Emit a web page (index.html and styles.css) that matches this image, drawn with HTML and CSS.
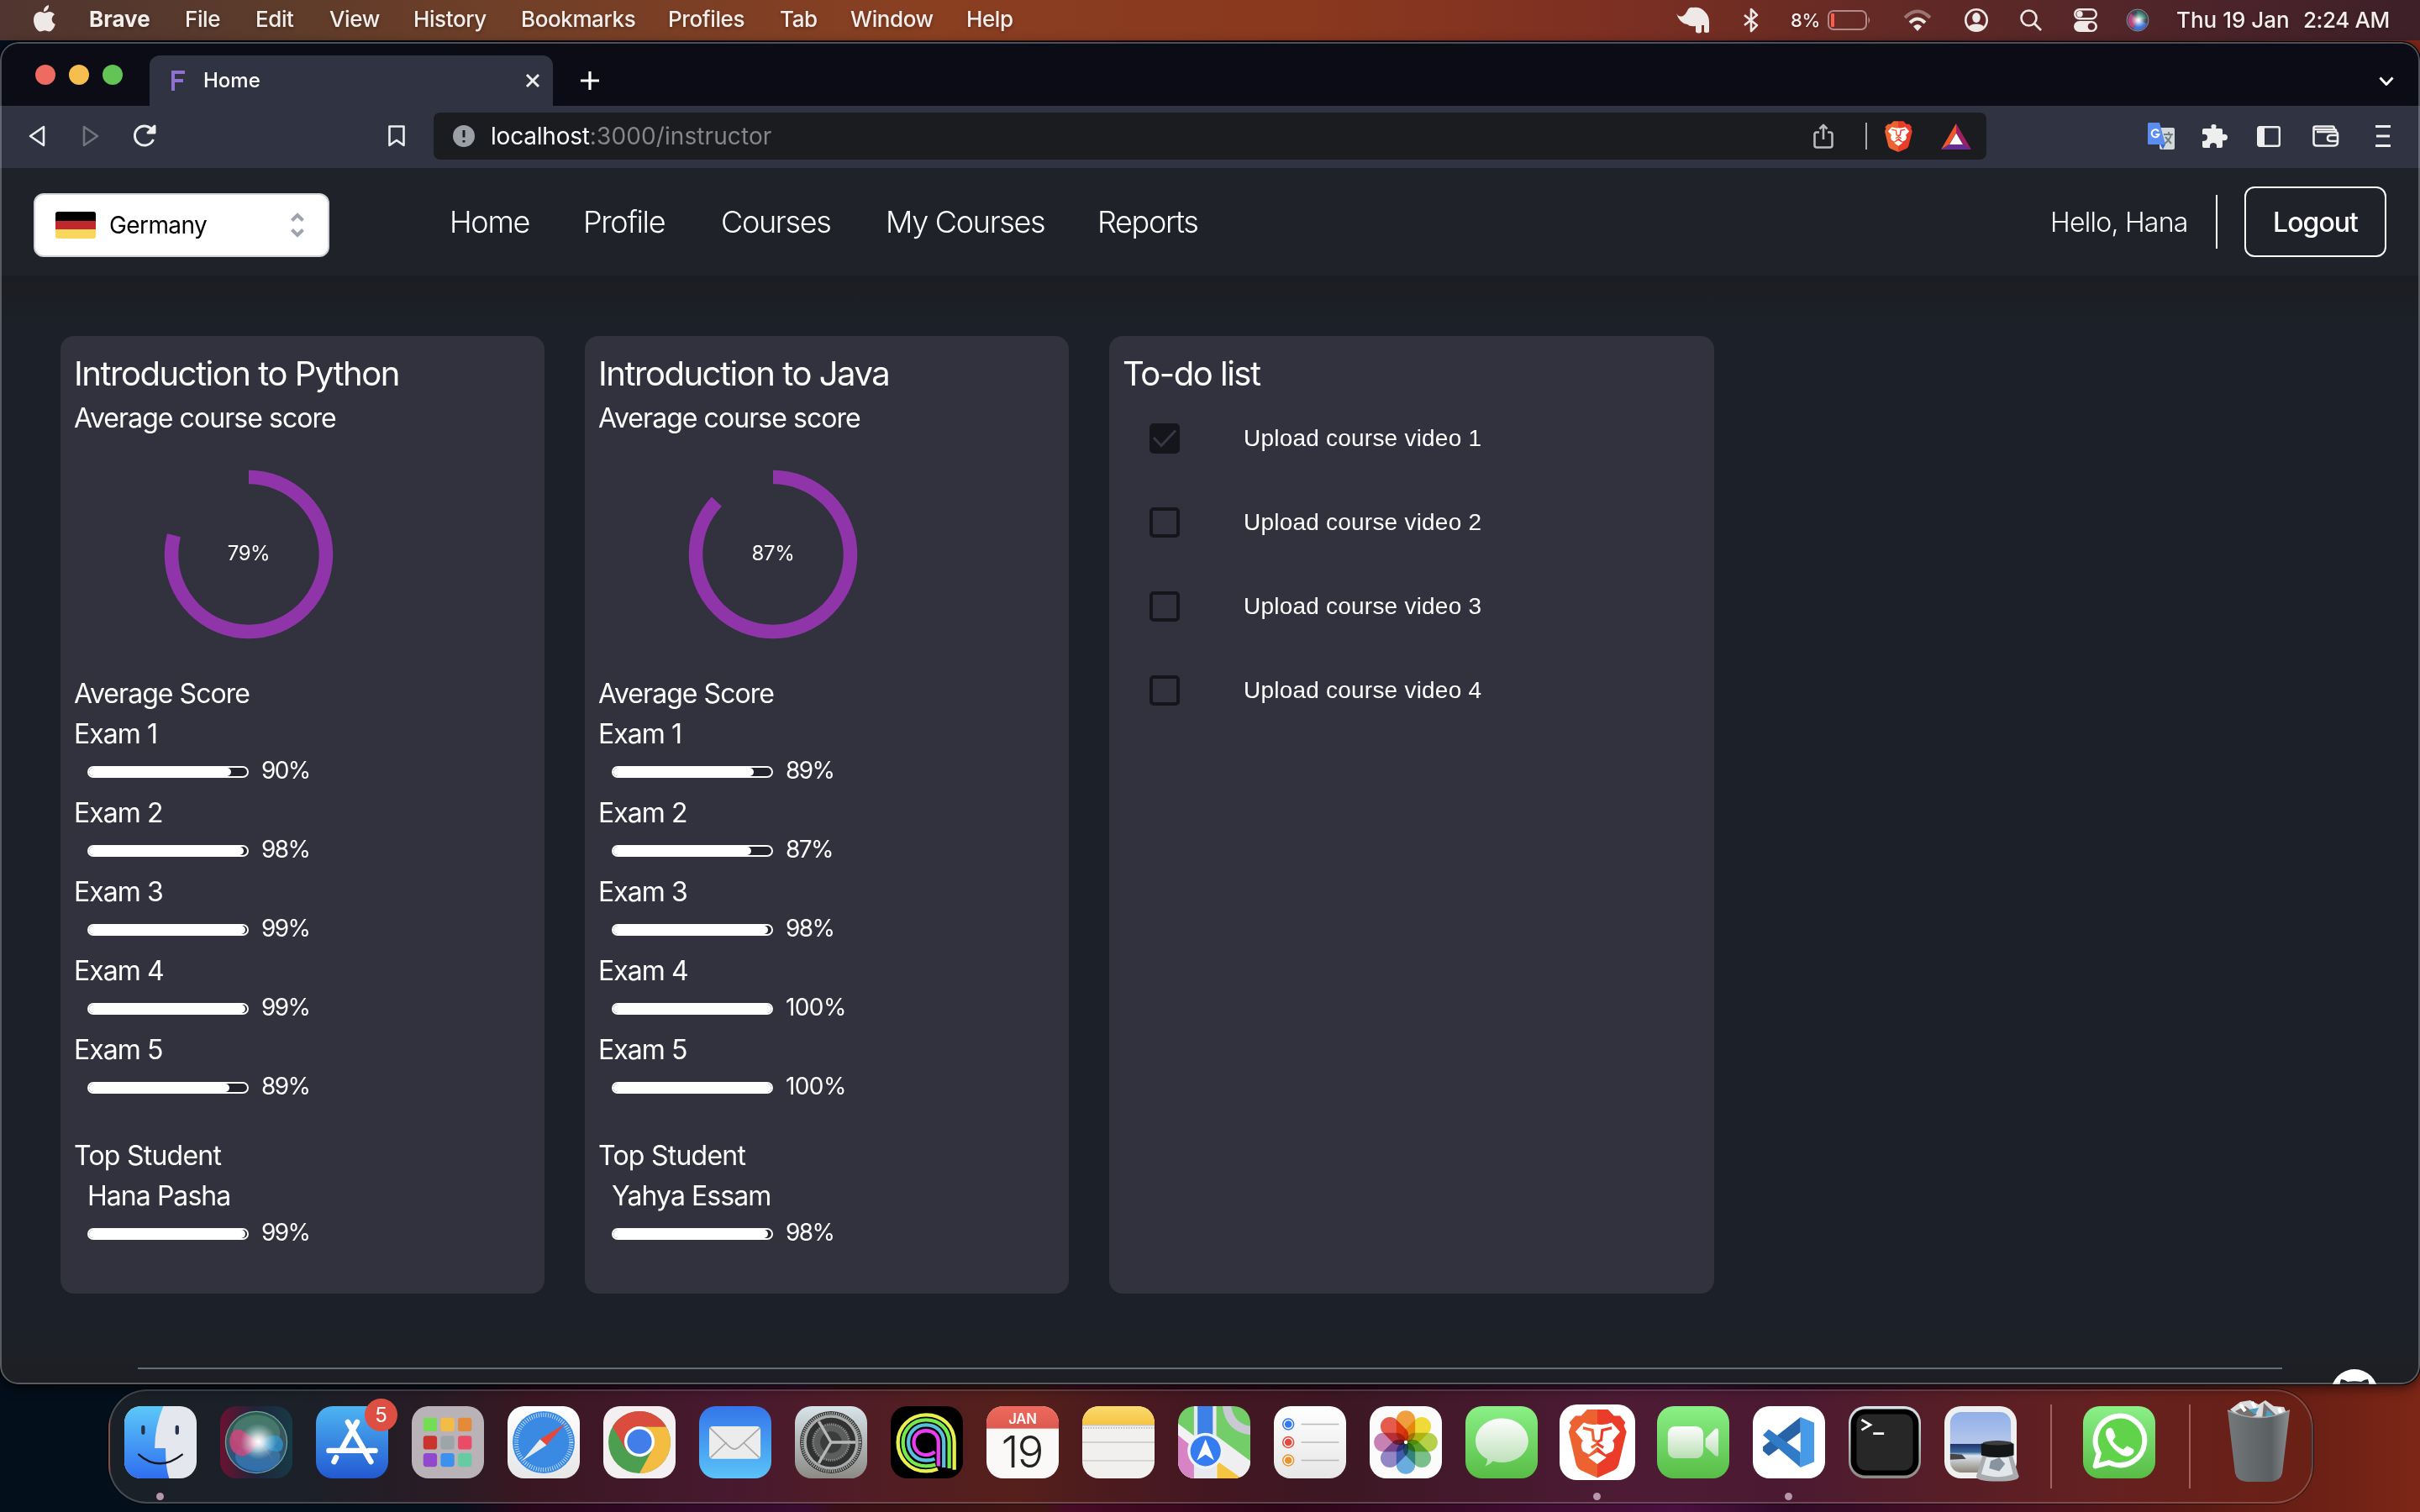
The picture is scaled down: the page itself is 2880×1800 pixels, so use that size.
FILE: index.html
```html
<!DOCTYPE html>
<html lang="en">
<head>
<meta charset="utf-8">
<title>Home</title>
<link rel="stylesheet" href="styles.css">
</head>
<body>
<svg class="defs" aria-hidden="true">
  <defs>
    <linearGradient id="blue" x2="0" y2="1"><stop stop-color="#4db4f1"/><stop offset="1" stop-color="#2359d2"/></linearGradient>
    <linearGradient id="mail" x2="0" y2="1"><stop stop-color="#3475ea"/><stop offset="1" stop-color="#5ac3f8"/></linearGradient>
    <linearGradient id="white" x2="0" y2="1"><stop stop-color="#ffffff"/><stop offset="1" stop-color="#e6e6e6"/></linearGradient>
    <linearGradient id="grey" x2="0" y2="1"><stop stop-color="#d8e4ea"/><stop offset="1" stop-color="#8c8a86"/></linearGradient>
    <linearGradient id="green" x2="0" y2="1"><stop stop-color="#8bf087"/><stop offset="1" stop-color="#57bd45"/></linearGradient>
    <linearGradient id="red" x2="0" y2="1"><stop stop-color="#ef6a5f"/><stop offset="1" stop-color="#db5a4f"/></linearGradient>
    <linearGradient id="yellow" x2="0" y2="1"><stop stop-color="#fbdb70"/><stop offset="1" stop-color="#f5c440"/></linearGradient>
    <linearGradient id="cam" x2="0" y2="1"><stop stop-color="#fdfdfd"/><stop offset="1" stop-color="#b9dfb4"/></linearGradient>
    <linearGradient id="lion"><stop offset=".5" stop-color="#ec6230"/><stop offset=".5" stop-color="#ea3c28"/></linearGradient>
    <linearGradient id="bin"><stop stop-color="#74787b"/><stop offset=".35" stop-color="#666b6e"/><stop offset=".7" stop-color="#5a5f62"/><stop offset="1" stop-color="#8b8f92"/></linearGradient>
    <linearGradient id="sky" x2="0" y2="1"><stop stop-color="#8fb0ea"/><stop offset=".52" stop-color="#b6c6ea"/><stop offset=".53" stop-color="#20356a"/><stop offset=".66" stop-color="#39649a"/><stop offset=".72" stop-color="#dce6ee"/><stop offset="1" stop-color="#8e8578"/></linearGradient>
    <linearGradient id="siriBg"><stop stop-color="#6a1230"/><stop offset=".5" stop-color="#20243c"/><stop offset="1" stop-color="#173a46"/></linearGradient>
    <linearGradient id="siriOrb" x2="0" y2="1"><stop stop-color="#2c5e50"/><stop offset=".45" stop-color="#3d5560"/><stop offset="1" stop-color="#1e4f96"/></linearGradient>
    <radialGradient id="glow"><stop stop-color="#fff"/><stop offset=".3" stop-color="#fff" stop-opacity=".75"/><stop offset="1" stop-color="#bfe8ee" stop-opacity="0"/></radialGradient>
    <linearGradient id="face" x2="0" y2="1"><stop stop-color="#5cc8f8"/><stop offset="1" stop-color="#2f6ef0"/></linearGradient>
    <clipPath id="tile"><rect width="100" height="100" rx="23"/></clipPath>
    <symbol id="brave" viewBox="0 0 100 100">
      <path fill="url(#lion)" d="M36.500 6.700H64L72 15L80 15L87 24L85 28L88.500 36L78 80Q76 85 72 87L50 97L28 87Q24 85 22 80L12 36L15.500 28L13 24L21 15H28.500Z"/>
      <path fill="#fff" d="M21 36L32 24Q41 28 50 26Q60 28 69 24L80 36L70 48Q75 52 70 62L61 66L50 56L39 66L31 62Q26 52 31 48ZM38 70L50 63L62 70L50 79Z"/>
      <path fill="none" stroke="url(#lion)" stroke-width="3.500" d="M31 31L43.500 34L45 47L50 49.500L55 47L56.500 34L69 31M42 57L50 52L58 57"/>
    </symbol>
  </defs>
</svg>

<header class="menubar">
  <svg class="apple" viewBox="0 0 26 32"><path d="M18 0C18.500 4 15.500 8 12 8C11.500 4 14.500 1 18 0ZM13 9.500C15 9.500 16.500 8 19 8C21.500 8 23.700 9.500 25 11.300C20 14.500 21 21 25.800 23C24.500 27 21.500 31.500 18.700 31.500C16.500 31.500 15.700 30.200 13.300 30.200C11 30.200 10 31.500 8 31.500C4.500 31.500 0 24.500 0 18C0 11.500 4 8 7.700 8C10 8 11.700 9.500 13 9.500Z"/></svg>
  <nav class="menus">
    <b>Brave</b><span>File</span><span>Edit</span><span>View</span><span>History</span><span>Bookmarks</span><span>Profiles</span><span>Tab</span><span>Window</span><span>Help</span>
  </nav>
  <div class="status">
    <svg class="rhino" viewBox="0 0 40 32"><path d="M1 8Q4 13 9 11Q12 9 14 5Q16 0 21 1Q30 0 35 6Q40 11 40 18V30Q37 32 34 30V22H31V30Q28 33 24 30V23Q17 24 14 21Q5 20 1 8Z"/></svg>
    <svg class="bluetooth line" viewBox="0 0 20 28"><path d="M2 8L17 20L10 27V1L17 8L2 20"/></svg>
    <span class="percent">8%</span>
    <svg class="battery" viewBox="0 0 52 24"><rect x="1" y="1" width="45" height="22" rx="6" fill="none" stroke="#b08a86" stroke-width="2"/><rect x="4" y="4" width="4" height="16" rx="1" fill="#ff5b4c"/><path d="M48.500 8Q52 12 48.500 16Z" fill="#b08a86"/></svg>
    <svg class="wifi" viewBox="0 0 34 26"><path fill="none" stroke="#9c7472" stroke-width="4" d="M2 10Q17 -5 32 10"/><path fill="none" stroke="#eee8e6" stroke-width="4" d="M8 16Q17 7 26 16"/><path d="M12 20.500Q17 15.500 22 20.500L17 26Z"/></svg>
    <svg class="user" viewBox="0 0 28 28"><circle cx="14" cy="14" r="12.700" fill="none" stroke="#eee8e6" stroke-width="2.600"/><ellipse cx="14" cy="11" rx="4.800" ry="6"/><path d="M5 22Q7 18.500 14 18.500Q21 18.500 23 22Q19 27 14 27Q9 27 5 22Z"/></svg>
    <svg class="search line" viewBox="0 0 26 26"><circle cx="10.500" cy="10.500" r="9"/><path d="M17 17L25 25"/></svg>
    <svg class="control" viewBox="0 0 28 28"><rect x="1.200" y="1.200" width="25.600" height="11" rx="5.500" fill="none" stroke="#eee8e6" stroke-width="2.400"/><circle cx="7" cy="6.700" r="3.700"/><rect y="15" width="28" height="13" rx="6.500"/><circle cx="21" cy="21.500" r="4.300" fill="#58272b"/></svg>
    <svg class="orb" viewBox="0 0 28 28"><circle cx="14" cy="14" r="13" fill="#4a4658" stroke="#7f8f98" stroke-width="1"/><path d="M14 14L6 6Q1 12 4 20L9 24Z" fill="#b8457a"/><path d="M14 14L9 25Q20 29 25 18Z" fill="#4072d8"/><path d="M14 14L25 12Q22 3 13 3Z" fill="#36806c"/><circle cx="15" cy="14" r="9" fill="url(#glow)"/></svg>
    <span class="date">Thu 19 Jan</span><span class="time">2:24 AM</span>
  </div>
</header>

<main class="window">
  <div class="tabstrip">
    <i class="light close"></i><i class="light min"></i><i class="light max"></i>
    <div class="tab">
      <svg class="favicon" viewBox="0 0 16 24"><path d="M0 0H16V4H4V10H14V14H4V24H0Z" fill="#8f72cf"/></svg>
      <span>Home</span>
      <svg class="x line" viewBox="0 0 18 18"><path d="M2 2L16 16M16 2L2 16"/></svg>
    </div>
    <svg class="plus line" viewBox="0 0 24 24"><path d="M12 1V23M1 12H23"/></svg>
    <svg class="down line" viewBox="0 0 18 12"><path d="M1.500 1.500L9 9.500L16.500 1.500"/></svg>
  </div>

  <div class="toolbar">
    <svg class="back line" viewBox="0 0 20 26"><path d="M18 2V24L2 13Z"/></svg>
    <svg class="forward line" viewBox="0 0 20 26"><path d="M2 2V24L18 13Z"/></svg>
    <svg class="reload line" viewBox="0 0 28 28"><path d="M24 8A11.500 11.500 0 1 0 24.500 18"/><path d="M26 2V10H18Z" fill="#eee"/></svg>
    <svg class="bookmark line" viewBox="0 0 20 26"><path d="M1.500 1.500H18.500V24L10 18L1.500 24Z"/></svg>
    <div class="address">
      <svg class="info" viewBox="0 0 26 26"><circle cx="13" cy="13" r="13" fill="#9aa0a6"/><path d="M13 6V14.500M13 18V20.500" stroke="#1b1c20" stroke-width="3"/></svg>
      <span class="host">localhost</span><span class="path">:3000/instructor</span>
      <svg class="share line" viewBox="0 0 24 30"><path d="M7 10.500H4Q1.500 10.500 1.500 13V26Q1.500 28.500 4 28.500H20Q22.500 28.500 22.500 26V13Q22.500 10.500 20 10.500H17M12 19V2M7.500 6.500L12 2L16.500 6.500"/></svg>
      <i class="bar"></i>
      <svg class="shield" viewBox="12 6 77 91" preserveAspectRatio="none"><use href="#brave" width="100" height="100"/></svg>
      <svg class="bat" viewBox="0 0 36 31"><path fill="#f1562b" d="M18 0V11L9 26L0 31Z"/><path fill="#9e1f63" d="M18 0L36 31L27 26L18 11Z"/><path fill="#662d91" d="M0 31L9 25H27L36 31Z"/><path fill="#fff" d="M18 11.500L26 25H10Z"/></svg>
    </div>
    <svg class="translate" viewBox="0 0 32 32"><rect x="14" y="6" width="18" height="26" rx="2" fill="#d5d8d8"/><path d="M15 26H21L18 32Z" fill="#3367d6"/><path d="M1 0H14L21 26H1Q0 26 0 25V1Z" fill="#5b8def"/><path d="M19 14H30M25 11V14M28 14Q26 21 20 25M21 17L28 25" fill="none" stroke="#6e8087" stroke-width="2"/><path d="M13 10.500A4.500 4.500 0 1 0 13.500 14H9.500" fill="none" stroke="#fff" stroke-width="2"/></svg>
    <svg class="puzzle" viewBox="0 0 30 28"><path d="M8 5H11Q9 0 13.500 0Q18 0 16 5H22Q24 5 24 7V12Q30 11 30 15.500Q30 20 24 19V26Q24 28 22 28H17Q18 22 13 22Q8 22 9 28H2Q0 28 0 26V20Q6 20 6 15.500Q6 11 0 12V7Q0 5 2 5Z"/></svg>
    <svg class="side" viewBox="0 0 28 25"><rect x="1.200" y="1.200" width="25.600" height="22.600" rx="2" fill="none" stroke="#eee" stroke-width="2.400"/><path d="M1 1H9V24H1Z"/></svg>
    <svg class="wallet line" viewBox="0 0 32 26"><path d="M28 8V6Q28 5 25 5H4Q1.500 5 1.500 3.500Q1.500 1.500 4 1.500H24Q26 1.500 26 5M1.500 3V21Q1.500 24.500 5 24.500H25Q30 24.500 30 20V11Q30 8 27 8H5M30 12H22Q18 12 18 15.500Q18 19 22 19H30"/></svg>
    <svg class="burger line" viewBox="0 0 18 26"><path d="M0 1.500H18M1 13H17M0 24.500H18"/></svg>
  </div>

  <div class="page">
    <header class="nav">
      <div class="select">
        <i class="flag"></i><span>Germany</span>
        <svg class="chev" viewBox="0 0 18 30"><path d="M2.500 9.500L9 3L15.500 9.500M2.500 20.500L9 27L15.500 20.500"/></svg>
      </div>
      <nav class="links"><a>Home</a><a>Profile</a><a>Courses</a><a>My Courses</a><a>Reports</a></nav>
      <span class="hello">Hello, Hana</span>
      <i class="rule"></i>
      <a class="logout">Logout</a>
    </header>

    <section class="cards">
      <article class="card">
        <h2>Introduction to Python</h2>
        <p>Average course score</p>
        <div class="ring"><svg viewBox="0 0 200 200"><circle cx="100" cy="100" r="92" pathLength="100" stroke-dasharray="79 21"/></svg><span>79%</span></div>
        <p>Average Score</p>
        <p>Exam 1</p><div class="score"><i class="track"><i style="width:90%"></i></i>90%</div>
        <p>Exam 2</p><div class="score"><i class="track"><i style="width:98%"></i></i>98%</div>
        <p>Exam 3</p><div class="score"><i class="track"><i style="width:99%"></i></i>99%</div>
        <p>Exam 4</p><div class="score"><i class="track"><i style="width:99%"></i></i>99%</div>
        <p>Exam 5</p><div class="score"><i class="track"><i style="width:89%"></i></i>89%</div>
        <p class="top">Top Student</p>
        <p class="name">Hana Pasha</p><div class="score"><i class="track"><i style="width:99%"></i></i>99%</div>
      </article>
      <article class="card">
        <h2>Introduction to Java</h2>
        <p>Average course score</p>
        <div class="ring"><svg viewBox="0 0 200 200"><circle cx="100" cy="100" r="92" pathLength="100" stroke-dasharray="87 13"/></svg><span>87%</span></div>
        <p>Average Score</p>
        <p>Exam 1</p><div class="score"><i class="track"><i style="width:89%"></i></i>89%</div>
        <p>Exam 2</p><div class="score"><i class="track"><i style="width:87%"></i></i>87%</div>
        <p>Exam 3</p><div class="score"><i class="track"><i style="width:98%"></i></i>98%</div>
        <p>Exam 4</p><div class="score full"><i class="track"><i style="width:100%"></i></i>100%</div>
        <p>Exam 5</p><div class="score full"><i class="track"><i style="width:100%"></i></i>100%</div>
        <p class="top">Top Student</p>
        <p class="name">Yahya Essam</p><div class="score"><i class="track"><i style="width:98%"></i></i>98%</div>
      </article>
      <article class="card todo">
        <h2>To-do list</h2>
        <ul>
          <li><i class="box done"><svg viewBox="0 0 36 36"><path d="M5 17L14 26.500L31 8.500"/></svg></i>Upload course video 1</li>
          <li><i class="box"></i>Upload course video 2</li>
          <li><i class="box"></i>Upload course video 3</li>
          <li><i class="box"></i>Upload course video 4</li>
        </ul>
      </article>
    </section>
    <footer class="footer">
      <hr>
      <svg class="github" viewBox="0 0 56 56"><circle cx="28" cy="28" r="28" fill="#fff"/><path fill="#1e2128" d="M12 12Q16 12 20 15Q28 13.500 36 15Q40 12 44 12Q46 17 45 22Q48 38 28 39Q8 38 11 22Q10 17 12 12Z"/></svg>
    </footer>
  </div>
</main>

<footer class="dock">
  <div class="app open"><svg viewBox="0 0 100 100"><g clip-path="url(#tile)"><rect width="100" height="100" fill="#e4e8ee"/><path fill="url(#face)" d="M0 0H54Q42 28 42 58H57Q57 85 62 100H0Z"/></g><path d="M26 29V37M73 29V37" stroke="#24324a" stroke-width="5" stroke-linecap="round"/><path d="M20 67Q48 92 80 67" fill="none" stroke="#15181e" stroke-width="2.800" stroke-linecap="round"/></svg></div>
  <div class="app"><svg viewBox="0 0 100 100"><rect width="100" height="100" rx="23" fill="url(#siriBg)"/><circle cx="50" cy="50" r="42.500" fill="url(#siriOrb)" stroke="#6fa898" stroke-width="1.500"/><ellipse cx="50" cy="38" rx="33" ry="26" fill="#5d9c84" opacity=".45"/><ellipse cx="52" cy="70" rx="31" ry="20" fill="#4aa0d8" opacity=".4"/><path d="M13 46Q16 31 27 32Q38 38 54 50Q40 70 30 69Q13 66 13 46Z" fill="#d8447c" opacity=".8"/><path d="M54 50Q64 39 80 41Q92 50 84 62Q70 66 54 50Z" fill="#2f9ad8" opacity=".7"/><path d="M53 48L76 78L57 52Z" fill="#f0a0b8" opacity=".7"/><circle cx="53" cy="49" r="25" fill="url(#glow)"/></svg></div>
  <div class="app"><svg viewBox="0 0 100 100"><rect width="100" height="100" rx="23" fill="url(#blue)"/><path d="M44 22L76 77M57 22L35 61M18 61.500H62M73 61.500H82M28 71L25 77" fill="none" stroke="#fff" stroke-width="7.500" stroke-linecap="round"/></svg><span class="badge">5</span></div>
  <div class="app"><svg viewBox="0 0 100 100"><rect width="100" height="100" rx="23" fill="#b9b3b8"/><rect x="16" y="16" width="19" height="19" rx="4" fill="#74dc55"/><rect x="40" y="16" width="19" height="19" rx="4" fill="#f3bc44"/><rect x="64" y="16" width="19" height="19" rx="4" fill="#e58a36"/><rect x="16" y="41" width="19" height="19" rx="4" fill="#c9352c"/><rect x="40" y="41" width="19" height="19" rx="4" fill="#9ea5a8"/><rect x="64" y="41" width="19" height="19" rx="4" fill="#ea4c66"/><rect x="16" y="65" width="19" height="19" rx="4" fill="#9148cd"/><rect x="40" y="65" width="19" height="19" rx="4" fill="#3c91ee"/><rect x="64" y="65" width="19" height="19" rx="4" fill="#66cba3"/></svg></div>
  <div class="app"><svg viewBox="0 0 100 100"><rect width="100" height="100" rx="23" fill="url(#white)"/><circle cx="50" cy="50" r="43" fill="#3a8ae4"/><circle cx="50" cy="50" r="38" fill="none" stroke="#cfe5fb" stroke-width="6" stroke-dasharray="1 2.300"/><path d="M80 24L54 54L45 46Z" fill="#e5483b"/><path d="M20 76L45 46L54 54Z" fill="#e8ecf0"/></svg></div>
  <div class="app"><svg viewBox="0 0 100 100"><rect width="100" height="100" rx="23" fill="#f4f0f1"/><circle cx="50" cy="50" r="43" fill="#4c9f50"/><path d="M50 28.500H87.200A43 43 0 0 1 50 93L68 60Z" fill="#f4bd42"/><path d="M50 50L31 60L12.800 28.500A43 43 0 0 1 87.200 28.500H50Z" fill="#d94c3e"/><circle cx="50" cy="49" r="21" fill="#fff"/><circle cx="50" cy="49" r="17" fill="#417ee9"/></svg></div>
  <div class="app"><svg viewBox="0 0 100 100"><rect width="100" height="100" rx="23" fill="url(#mail)"/><rect x="14" y="28" width="71" height="45" rx="5" fill="#ececec"/><path d="M16 71L38 50M83 71L61 50M15 30L41 55Q49 64 57 55L84 30" fill="none" stroke="#a9a9a9" stroke-width="2"/></svg></div>
  <div class="app"><svg viewBox="0 0 100 100"><rect width="100" height="100" rx="23" fill="url(#grey)"/><circle cx="50" cy="50" r="43" fill="#303130"/><circle cx="50" cy="50" r="36" fill="none" stroke="#a9abab" stroke-width="4"/><circle cx="50" cy="50" r="40" fill="none" stroke="#a9abab" stroke-width="4" stroke-dasharray="1.500 1.500"/><circle cx="50" cy="50" r="25" fill="#5c5e5e"/><circle cx="50" cy="50" r="25" fill="none" stroke="#8f9191" stroke-width="3" stroke-dasharray="1.500 1.500"/><circle cx="50" cy="50" r="15" fill="#3b3c3c"/><path d="M50 50H84M50 50L33 21M50 50L33 79" stroke="#b7b9b9" stroke-width="4"/></svg></div>
  <div class="app"><svg viewBox="0 0 100 100"><rect width="100" height="100" rx="23" fill="#000"/><g fill="none" stroke-width="5"><path stroke="#e6f04e" d="M65 87Q58 90 49 90C24 90 10 70 10 50S26 12 49 12S88 28 88 50V88"/><path stroke="#74ea4e" d="M62 81Q56 83 49 83C28 83 17 67 17 50S30 19 49 19S81 32 81 50V86"/><path stroke="#57bfdc" d="M61 73Q56 75 49 75C34 75 24.500 63 24.500 50S34 26 49 26S73.500 36 73.500 50V85"/><path stroke="#e93df0" d="M61 63Q56 67.500 49 67.500C38 67.500 32 59 32 50S38 34 49 34S66 41 66 50V83"/></g></svg></div>
  <div class="app"><svg viewBox="0 0 100 100"><g clip-path="url(#tile)"><rect width="100" height="100" fill="#faf9f8"/><rect width="100" height="31" fill="url(#red)"/></g><text class="jan" x="50" y="24.500">JAN</text><text class="day" x="49" y="85">19</text></svg></div>
  <div class="app"><svg viewBox="0 0 100 100"><g clip-path="url(#tile)"><rect width="100" height="100" fill="#f1f0ee"/><rect width="100" height="26" fill="url(#yellow)"/><path d="M0 26.500H100M0 50H100M0 75.500H100" stroke="#c8c6c6" stroke-width="1.600"/><path d="M1 30H100" stroke="#b5b3b3" stroke-width="2" stroke-dasharray="1.500 2"/></g></svg></div>
  <div class="app"><svg viewBox="0 0 100 100"><g clip-path="url(#tile)"><rect width="100" height="100" fill="#73cd68"/><path d="M0 24L100 100H0Z" fill="#f2f2f4"/><path d="M0 40L24 60V100H0Z" fill="#d883c4"/><path d="M52 40L100 76V100H85L40 60Z" fill="#efeff2"/><path d="M54 76L88 100H54Z" fill="#f5c542"/><path d="M22 0H53V100H22Z" fill="#e8e9ee"/><path d="M27 0H48V50H27Z" fill="#3c80e8"/><path d="M67 -4Q70 32 104 34" fill="none" stroke="#c8c9d3" stroke-width="12"/></g><circle cx="38" cy="62" r="25" fill="#eff2f8"/><circle cx="38" cy="62" r="21" fill="#357cf0"/><path d="M38 46L50 75L38 67L26 75Z" fill="#fff"/></svg></div>
  <div class="app"><svg viewBox="0 0 100 100"><rect width="100" height="100" rx="23" fill="url(#white)"/><path d="M38 25H90M38 50H90M38 75H90" stroke="#b9b9bb" stroke-width="1.800"/><g fill="#fff" stroke-width="1.800"><circle cx="20" cy="25" r="7.500" stroke="#3478f0"/><circle cx="20" cy="50" r="7.500" stroke="#e24a3e"/><circle cx="20" cy="75" r="7.500" stroke="#e8942f"/></g><circle cx="20" cy="25" r="5" fill="#3478f0"/><circle cx="20" cy="50" r="5" fill="#e24a3e"/><circle cx="20" cy="75" r="5" fill="#e8942f"/></svg></div>
  <div class="app"><svg class="petals" viewBox="0 0 100 100"><rect width="100" height="100" rx="23" fill="#fbfbfb"/><g><rect x="37" y="6" width="26" height="44" rx="13" fill="#f3a23e"/><rect x="37" y="6" width="26" height="44" rx="13" fill="#f3de38" transform="rotate(45 50 50)"/><rect x="37" y="6" width="26" height="44" rx="13" fill="#b9d54a" transform="rotate(90 50 50)"/><rect x="37" y="6" width="26" height="44" rx="13" fill="#7cc28c" transform="rotate(135 50 50)"/><rect x="37" y="6" width="26" height="44" rx="13" fill="#6dafe2" transform="rotate(180 50 50)"/><rect x="37" y="6" width="26" height="44" rx="13" fill="#9488c8" transform="rotate(225 50 50)"/><rect x="37" y="6" width="26" height="44" rx="13" fill="#c884b6" transform="rotate(270 50 50)"/><rect x="37" y="6" width="26" height="44" rx="13" fill="#ea5c4c" transform="rotate(315 50 50)"/></g><circle cx="50" cy="50" r="2.500" fill="#fff"/></svg></div>
  <div class="app"><svg viewBox="0 0 100 100"><rect width="100" height="100" rx="23" fill="url(#green)"/><path d="M50 17C71 17 87 31 87 48S71 78 50 78Q43 78 38 76Q34 81 27 83Q31 78 30 73C20 68 14 59 14 48C14 31 30 17 50 17Z" fill="url(#cam)"/></svg></div>
  <div class="app open big"><svg viewBox="0 0 100 100"><rect width="100" height="100" rx="23" fill="#fff"/><use href="#brave" width="100" height="100"/></svg></div>
  <div class="app"><svg viewBox="0 0 100 100"><rect width="100" height="100" rx="23" fill="url(#green)"/><rect x="15" y="28" width="49" height="44" rx="10" fill="url(#cam)"/><path d="M67 45L80 32Q85 29 85 34V66Q85 72 80 68L67 56Z" fill="url(#cam)"/></svg></div>
  <div class="app open"><svg viewBox="0 0 100 100"><rect width="100" height="100" rx="23" fill="#fff"/><path d="M66 15V36L22 69L14 62V56Z" fill="#2763a6"/><path d="M14 40L22 32L66 64V85Z" fill="#2f7bc8"/><path d="M66 15L85 23V77L66 85Z" fill="#479ae8"/></svg></div>
  <div class="app"><svg viewBox="0 0 100 100"><rect width="100" height="100" rx="23" fill="url(#grey)"/><rect x="3" y="4" width="94" height="92" rx="20" fill="#000"/><rect x="11" y="11" width="78" height="78" rx="13" fill="#272727"/><path d="M18 19L30 26L18 33M34 38H49" fill="none" stroke="#fff" stroke-width="3.300"/></svg></div>
  <div class="app"><svg viewBox="0 0 100 100"><rect width="100" height="100" rx="23" fill="#f0eff0"/><rect x="8" y="8" width="84" height="84" rx="15" fill="url(#sky)"/><path d="M8 66L24 67L30 73L8 74Z" fill="#48454a"/><path d="M53 68H94L103 97Q103 104 74 104Q44 104 44 97Z" fill="#a9acaf"/><path d="M58 71H89L95 94Q75 102 51 94Z" fill="#e4e7ea"/><path d="M64 76L76 71L84 80L76 90L62 86Z" fill="#8794a0"/><path d="M51 52Q74 44 96 52V68Q74 74 51 68Z" fill="#151617"/><ellipse cx="73.500" cy="51" rx="20" ry="3" fill="#3b3d3e"/></svg></div>
  <i class="split"></i>
  <div class="app"><svg viewBox="0 0 100 100"><rect width="100" height="100" rx="23" fill="url(#green)"/><path d="M17 83L22 65A34 34 0 1 1 36 78Z" fill="#60d34a" stroke="#fff" stroke-width="7" stroke-linejoin="round"/><path d="M33 32Q39 27 42 34L45 42L41 48Q47 57 56 60L61 55L70 60Q72 66 64 69Q54 72 40 56Q28 40 33 32Z" fill="#fff"/></svg></div>
  <i class="split last"></i>
  <div class="app trash"><svg viewBox="0 0 76 98"><path d="M4 12L16 3L28 1L38 6L46 1L56 8L68 9L72 18L60 24H18Z" fill="#d9dbdc"/><path d="M10 14L22 8L36 18L24 24ZM44 4L60 20L42 24Z" fill="#77706c"/><path d="M26 12L38 10L34 18ZM48 12L56 18L46 22Z" fill="#4b9fc4"/><path d="M16 6L22 14M30 3L34 10M62 10L66 20" stroke="#fff" stroke-width="4"/><path d="M1 13Q38 30 75 13L66 88Q64 97 52 98H24Q12 97 10 88Z" fill="url(#bin)"/><path d="M1 13Q38 30 75 13" fill="none" stroke="#a3a6a8" stroke-width="1.500"/></svg></div>
</footer>
</body>
</html>
```
FILE: styles.css
```css
* { box-sizing: border-box; }
body {
  margin: 0;
  width: 2880px;
  height: 1800px;
  overflow: hidden;
  display: flex;
  flex-direction: column;
  font-family: Inter, "Liberation Sans", sans-serif;
  color: #fff;
  background: linear-gradient(90deg, #030f1b 0, #04101c 540px, #28061a 620px, #3a0c32 960px, #3a1016 1000px, #401512 1240px, #480a26 1270px, #2e0618 1520px, #4a1040 2000px, #300a28 2130px, #480f22 2360px, #5a1a14 2620px, #7c2616 2880px);
}
svg { display: block; flex: none; overflow: visible; }
i { display: block; flex: none; }
h2, p, ul { margin: 0; padding: 0; font-weight: inherit; }
.defs { position: absolute; width: 0; height: 0; }
.line { fill: none; stroke: #eee; stroke-width: 2.600; stroke-linejoin: round; }

.menubar {
  flex: none;
  height: 48px;
  margin-bottom: 2px;
  padding-left: 40px;
  display: flex;
  align-items: center;
  font-size: 26px;
  font-weight: 500;
  letter-spacing: -.4px;
  line-height: 48px;
  color: #f3eeec;
  fill: #eee8e6;
  text-shadow: 0 2px 4px rgba(0, 0, 0, .3);
  background: linear-gradient(90deg, #503530 0, #5b3b2b 300px, #703f28 600px, #8a3f21 1100px, #8a381e 1560px, #7e3022 1900px, #692b24 2160px, #542629 2500px, #3d2029 2880px);
}
.apple { width: 26px; height: 32px; margin-top: -4px; }
.menus {
  display: grid;
  grid-template-columns: 114px 84px 88px 100px 128px 175px 133px 84px 138px 60px;
  margin-left: 40px;
  height: 48px;
  line-height: 46px;
}
.menus b { letter-spacing: 0; }
.status { display: flex; align-items: center; margin-left: auto; padding-right: 35px; line-height: 46px; height: 48px; }
.status .line { stroke: #eee8e6; }
.rhino { width: 40px; height: 32px; }
.bluetooth { width: 20px; height: 28px; margin-left: 40px; }
.percent { width: 44px; margin-left: 37px; font-size: 22px; }
.battery { width: 52px; height: 24px; }
.wifi { width: 34px; height: 26px; margin-left: 38px; }
.user { width: 28px; height: 28px; margin-left: 39px; }
.search { width: 26px; height: 26px; margin-left: 38px; }
.control { width: 28px; height: 28px; margin-left: 38px; }
.orb { width: 28px; height: 28px; margin-left: 34px; }
.date { width: 151px; margin-left: 32px; letter-spacing: 0; }
.time { width: 104px; white-space: nowrap; }

.window {
  position: relative;
  flex: none;
  height: 1598px;
  border-radius: 22px;
  overflow: hidden;
  background: #1d2027;
  box-shadow: 0 0 0 1px #000, 0 4px 14px rgba(0, 0, 0, .6);
}
.window::after {
  content: "";
  position: absolute;
  inset: 0;
  border: 2px solid rgba(170, 176, 180, .42);
  border-radius: 22px;
}
.tabstrip { height: 76px; display: flex; align-items: flex-start; padding: 16px 31px 0 42px; background: #0b0c15; }
.light { width: 24px; height: 24px; margin: 11px 16px 0 0; border-radius: 50%; }
.close { background: #ed6b60; }
.min { background: #f5be4f; }
.max { background: #62c454; }
.tab {
  width: 480px;
  height: 60px;
  margin-left: 16px;
  padding: 0 15px 0 26px;
  display: flex;
  align-items: center;
  border-radius: 12px 12px 0 0;
  background: #303342;
  font-size: 24px;
  font-weight: 500;
}
.favicon { width: 16px; height: 24px; }
.tab span { margin-left: 22px; padding-bottom: 1px; }
.x { width: 18px; height: 18px; margin-left: auto; stroke-width: 3; }
.plus { width: 24px; height: 24px; margin: 18px 0 0 32px; stroke: #fff; stroke-width: 3.200; }
.down { width: 18px; height: 12px; margin: 25px 0 0 auto; stroke: #fff; stroke-width: 3; }

.toolbar { height: 74px; display: flex; align-items: center; padding: 0 35px 2px 34px; background: #303342; fill: #eee; }
.toolbar .line { fill: none; }
.back, .forward { width: 20px; height: 26px; }
.forward { margin-left: 44px; opacity: .35; }
.reload { width: 28px; height: 28px; margin-left: 40px; stroke-width: 3; }
.bookmark { width: 20px; height: 26px; margin-left: 276px; }
.address {
  width: 1848px;
  height: 56px;
  margin-left: 34px;
  padding: 0 18px 0 23px;
  display: flex;
  align-items: center;
  border-radius: 8px;
  background: #1b1c20;
  font-size: 28px;
}
.info { width: 26px; height: 26px; margin-right: 19px; }
.host { letter-spacing: -.2px; }
.path { color: #85868a; letter-spacing: .1px; }
.share { width: 24px; height: 30px; margin-left: auto; stroke: #b9babc; }
.bar { width: 2px; height: 32px; margin: 0 21px 0 38px; background: #a9aaad; }
.shield { width: 33px; height: 37px; overflow: hidden; }
.bat { width: 36px; height: 31px; margin-left: 34px; }
.translate { width: 32px; height: 32px; margin-left: 192px; }
.puzzle { width: 30px; height: 28px; margin-left: 33px; }
.side { width: 28px; height: 25px; margin-left: 35px; }
.wallet { width: 32px; height: 26px; margin-left: 38px; }
.burger { width: 18px; height: 26px; margin-left: 43px; stroke-width: 3.200; }

.page { height: 1448px; background: linear-gradient(180deg, #1c1d22 128px, #1c2028 190px, #1c2028 1380px, #1e1f23 1448px); }
.nav { height: 128px; display: flex; align-items: center; padding: 0 40px; background: #1f2229; }
.select {
  width: 352px;
  height: 76px;
  margin-top: 8px;
  padding: 0 27px 0 24px;
  display: flex;
  align-items: center;
  border: 2px solid #d1d5db;
  border-radius: 12px;
  background: #fff;
  color: #000;
  font-size: 28px;
  letter-spacing: -.6px;
}
.flag { width: 48px; height: 32px; margin-right: 16px; border-radius: 3px; background: linear-gradient(#000 11px, #c1282d 11px 21px, #f9d75c 21px); }
.chev { width: 18px; height: 30px; margin-left: auto; fill: none; stroke: #9ca3af; stroke-width: 4; }
.links { display: grid; grid-template-columns: 159px 164px 196px 252px 130px; margin-left: 143px; font-size: 36px; font-weight: 350; letter-spacing: -1.300px; line-height: 56px; white-space: nowrap; }
.hello { width: 197px; margin-left: auto; font-size: 32px; font-weight: 300; letter-spacing: -.750px; white-space: nowrap; }
.rule { width: 2px; height: 64px; margin-right: 32px; background: #fff; }
.logout { width: 169px; height: 84px; border: 2px solid #fff; border-radius: 12px; font-size: 32px; font-weight: 500; letter-spacing: -.950px; line-height: 82px; text-align: center; }

.cards { display: flex; gap: 48px; padding: 72px 0 0 72px; }
.card { width: 576px; height: 1140px; padding: 16px; border-radius: 16px; background: #31323e; font-size: 32px; font-weight: 430; line-height: 48px; letter-spacing: -.950px; }
.card h2 { height: 56px; padding-top: 1px; font-size: 40px; line-height: 56px; letter-spacing: -1.480px; }
.card p { height: 48px; padding-top: 1px; line-height: 49px; }
.ring { position: relative; width: 200px; height: 200px; margin: 40px 0 40px 108px; }
.ring svg { width: 200px; height: 200px; fill: none; stroke: #8f35a9; stroke-width: 16.500; transform: rotate(-90deg); }
.ring span { position: absolute; inset: 0; line-height: 198px; text-align: center; font-size: 24px; letter-spacing: -.400px; }
.score { display: flex; align-items: center; height: 46px; margin-left: 16px; padding-bottom: 5px; font-size: 28px; letter-spacing: -1.600px; }
.full { letter-spacing: -.6px; }
.track { width: 192px; height: 14px; margin: 5px 15px 0 0; border: 2px solid #fff; border-radius: 7px; background: #22232d; }
.track i { height: 10px; border-radius: 5px; background: #fff; }
.card .top { margin-top: 32px; letter-spacing: -.750px; }
.name { margin-left: 16px; }
.todo { width: 720px; }
.todo li {
  display: flex;
  align-items: center;
  height: 100px;
  padding-left: 32px;
  font: 28px/34px "Liberation Sans", Arial, sans-serif;
  letter-spacing: .220px;
}
.todo ul { list-style: none; }
.box { width: 36px; height: 36px; margin-right: 76px; border: 4px solid #15161b; border-radius: 5px; }
.done { border: 0; background: #15161b; }
.done svg { width: 36px; height: 36px; fill: none; stroke: #363846; stroke-width: 3; }
.footer { display: flex; flex-direction: column; padding: 88px 50px 0 164px; }
.footer hr { width: 2552px; height: 2px; margin: 0; border: 0; background: #636c79; }
.github { width: 56px; height: 56px; align-self: flex-end; }

.dock {
  flex: none;
  width: 2624px;
  height: 136px;
  margin: 6px 0 0 129px;
  padding: 18px 0 0 17px;
  display: flex;
  gap: 28px;
  border: 2px solid rgba(255, 255, 255, .2);
  border-radius: 46px;
  background: linear-gradient(90deg, #1a2028 0, #1b2029 220px, #2a1b24 400px, #3a1722 500px, #48192f 740px, #511d25 900px, #551f1b 1080px, #441722 1290px, #3d1724 1460px, #4d1b35 1800px, #4b1a32 1990px, #581e26 2200px, #652120 2380px, #6a2014 2624px);
  box-shadow: 0 0 0 1px rgba(0, 0, 0, .5);
}
.app { position: relative; flex: none; width: 86px; height: 86px; }
.app svg { width: 86px; height: 86px; }
.big svg { width: 90px; height: 90px; margin: -2px; }
.petals rect + rect, .petals g rect { mix-blend-mode: multiply; }
.open::after { content: ""; position: absolute; left: 38px; top: 103px; width: 9px; height: 9px; border-radius: 50%; background: #b596ad; }
.badge { position: absolute; left: 58px; top: -9px; width: 39px; height: 39px; border-radius: 50%; background: #de4f43; font-size: 24px; line-height: 39px; text-align: center; }
.jan { font: 600 19.500px Inter, sans-serif; fill: #fff; text-anchor: middle; letter-spacing: -.3px; }
.day { font: 300 61px Inter, sans-serif; fill: #222; text-anchor: middle; letter-spacing: -2px; }
.split { width: 2px; height: 100px; margin: -2px 9px 0 12px; background: rgba(235, 160, 155, .5); }
.last { margin-right: 15px; }
.app.trash svg { width: 76px; height: 98px; margin-top: -8px; }
```
